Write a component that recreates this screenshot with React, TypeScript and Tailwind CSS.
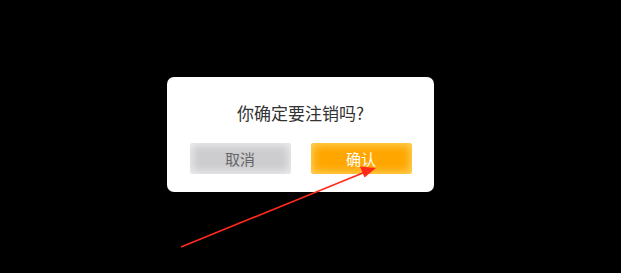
export default function App() {
  return (
    <div className="relative w-[621px] h-[273px] bg-black overflow-hidden font-['Noto_Sans_CJK_SC',sans-serif]">
      <div className="pt-[77px] pl-[167px]">
        <div className="w-[267px] h-[115px] bg-white rounded-[7px] flex flex-col items-center pt-[24px]">
          <div className="h-[24px] leading-[24px] text-[17px] text-[#333]">你确定要注销吗?</div>
          <div className="mt-[18px] flex gap-[20px]">
            <button className="w-[101px] h-[31px] rounded-[3px] bg-[#cdcdd0] shadow-[inset_0_0_8px_2px_rgba(240,240,243,0.95)] text-[15px] text-[#666] leading-[31px]">
              取消
            </button>
            <button className="w-[101px] h-[31px] rounded-[3px] bg-[#ffa600] shadow-[inset_0_0_8px_2px_#ffd45c] text-[15px] text-white leading-[31px]">
              确认
            </button>
          </div>
        </div>
      </div>
      {/* annotation arrow */}
      <svg className="absolute left-0 top-0" width="621" height="273" viewBox="0 0 621 273">
        <line x1="181" y1="247" x2="364" y2="172.5" stroke="#ff2a1a" strokeWidth="1.6" />
        <polygon points="376,168 360,166.5 364.5,177.5" fill="#ff2a1a" />
      </svg>
    </div>
  );
}
